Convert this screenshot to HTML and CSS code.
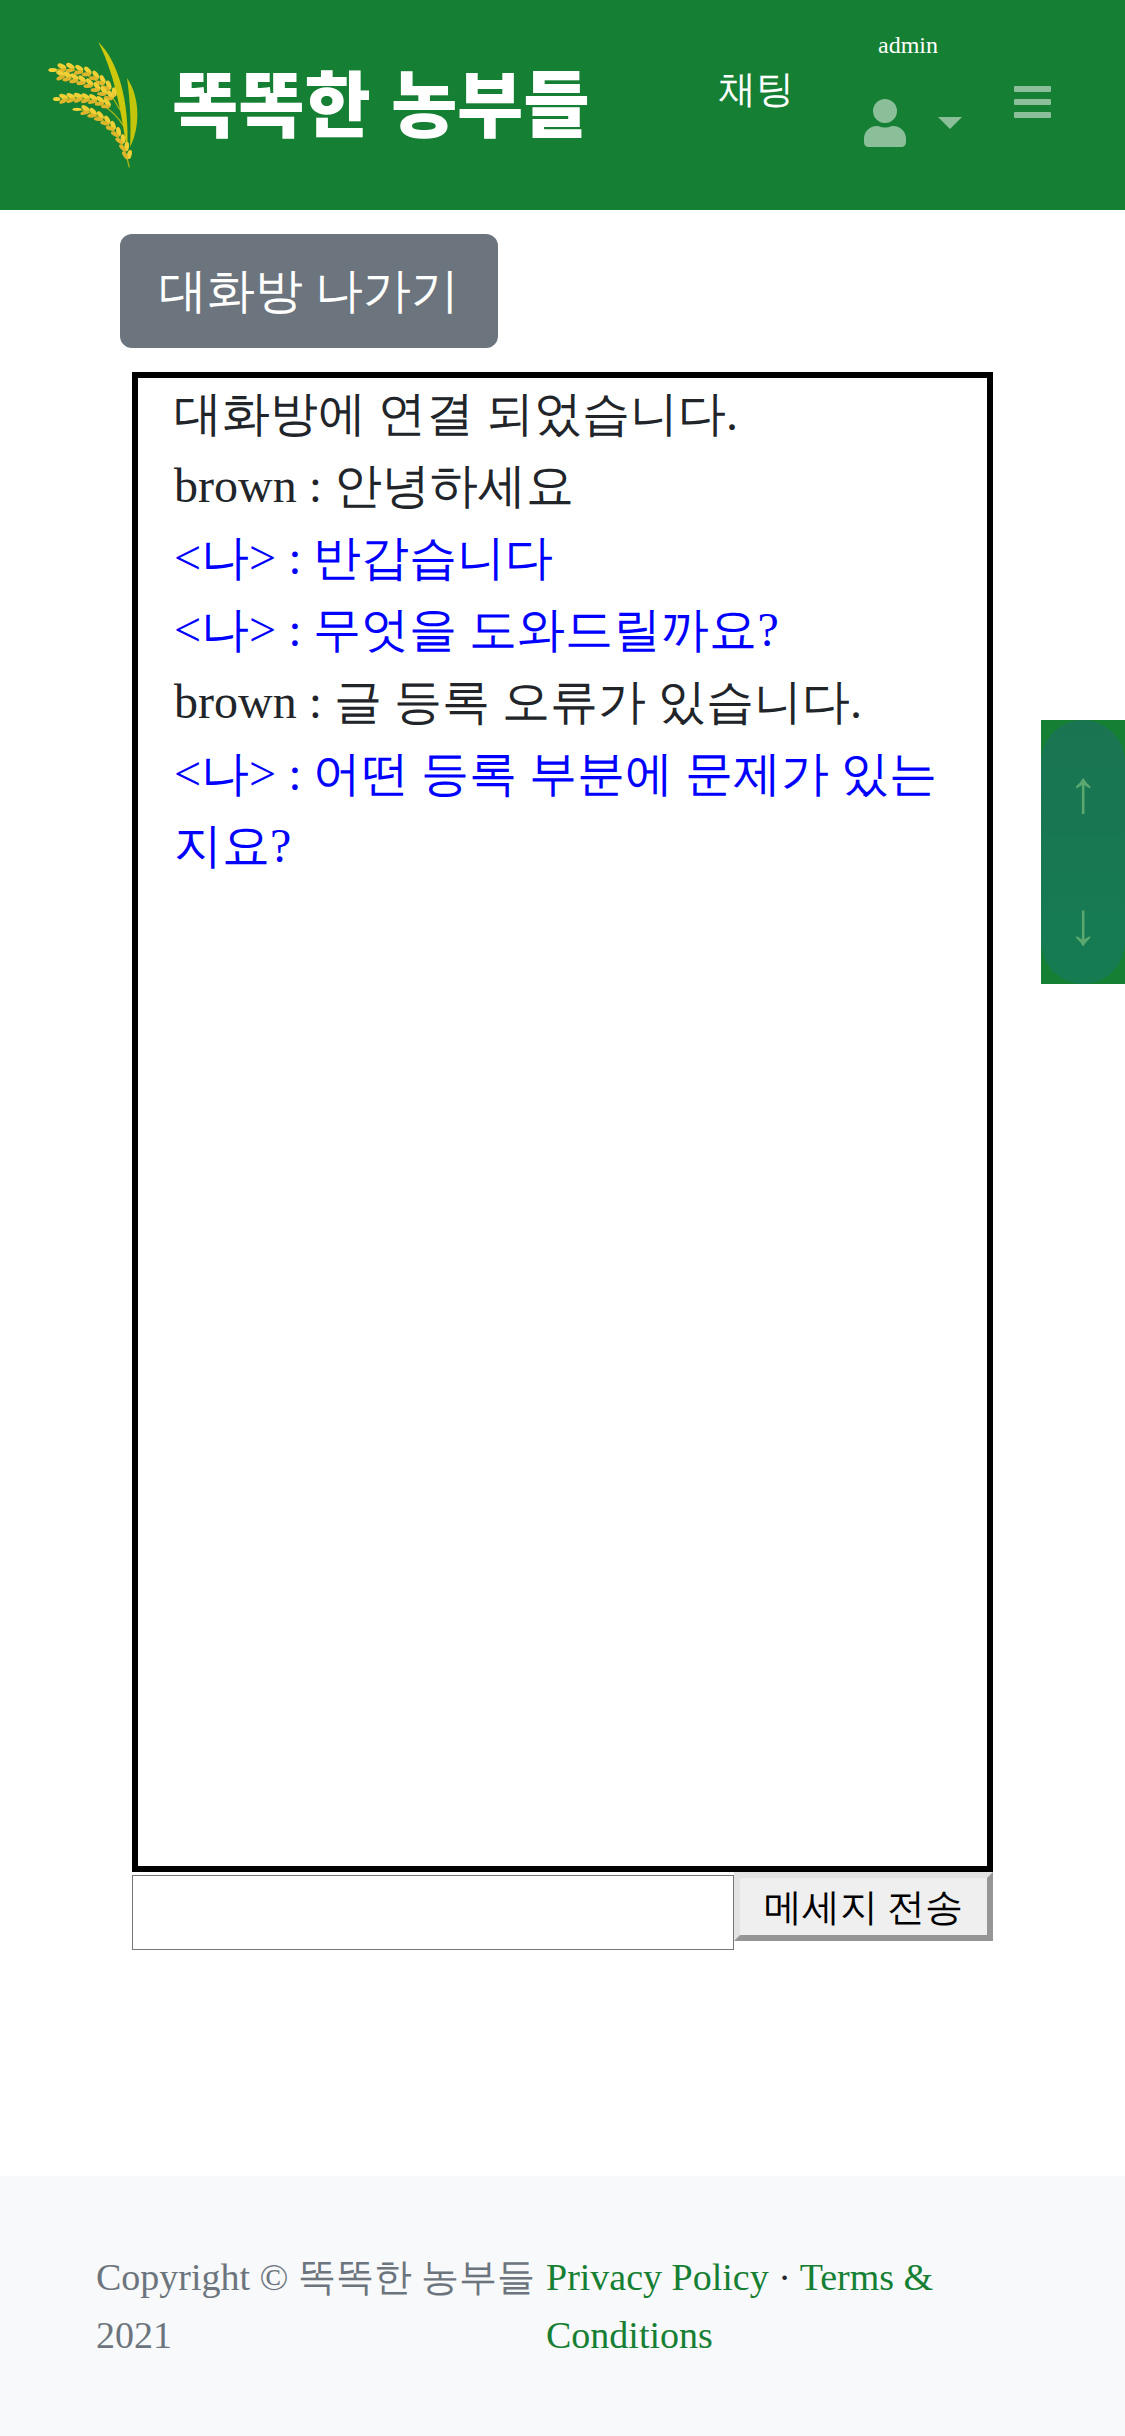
FILE: index.html
```html
<!DOCTYPE html>
<html lang="ko">
<head>
<meta charset="utf-8">
<meta name="viewport" content="width=device-width, initial-scale=1">
<title>똑똑한 농부들</title>
<link rel="stylesheet" href="styles.css">
</head>
<body>
<header class="topbar">
  <a class="brand" href="#">
    <svg class="brand-mark" viewBox="0 0 390 480" aria-hidden="true">
      <defs>
        <g id="grain">
          <ellipse cx="-1" cy="-6" rx="14" ry="7" transform="rotate(25)" fill="#f0d035"/>
          <ellipse cx="-1" cy="7" rx="14" ry="6" transform="rotate(-25)" fill="#ddb62c"/>
        </g>
      </defs>
      <g fill="none" stroke="#a8b414" stroke-width="4">
        <path d="M80 148Q200 140 270 270"/><path d="M95 237Q220 220 282 320"/><path d="M150 268Q270 300 298 442"/>
      </g>
      <path d="M205 66C262 120 300 240 292 390C275 300 262 180 205 66Z" fill="#cdc80c"/>
      <path d="M291 174C330 230 332 320 300 382C304 300 300 240 291 174Z" fill="#c3c40c"/>
      <ellipse cx="68" cy="150" rx="13" ry="6" fill="#f5d53a"/>
      <ellipse cx="80" cy="237" rx="11" ry="6" fill="#f5d53a"/>
      <ellipse cx="141" cy="268" rx="14" ry="5" fill="#f5d53a"/>
      <use href="#grain" transform="translate(94 145)"/><use href="#grain" transform="translate(119 144) rotate(5)"/><use href="#grain" transform="translate(145 150) rotate(12)"/><use href="#grain" transform="translate(170 156) rotate(20)"/><use href="#grain" transform="translate(193 168) rotate(30)"/><use href="#grain" transform="translate(213 182) rotate(38)"/><use href="#grain" transform="translate(231 198) rotate(45)"/><use href="#grain" transform="translate(247 218) rotate(55)"/>
      <use href="#grain" transform="translate(90 166)"/><use href="#grain" transform="translate(110 170) rotate(8)"/><use href="#grain" transform="translate(131 176) rotate(12)"/><use href="#grain" transform="translate(153 182) rotate(18)"/><use href="#grain" transform="translate(175 191) rotate(22)"/><use href="#grain" transform="translate(197 203) rotate(26)"/><use href="#grain" transform="translate(217 215) rotate(30)"/><use href="#grain" transform="translate(237 228) rotate(35)"/>
      <use href="#grain" transform="translate(99 236)"/><use href="#grain" transform="translate(121 234)"/><use href="#grain" transform="translate(143 233)"/><use href="#grain" transform="translate(165 235) rotate(5)"/><use href="#grain" transform="translate(187 238) rotate(10)"/><use href="#grain" transform="translate(208 244) rotate(16)"/><use href="#grain" transform="translate(228 252) rotate(24)"/>
      <use href="#grain" transform="translate(164 271) rotate(10)"/><use href="#grain" transform="translate(186 280) rotate(20)"/><use href="#grain" transform="translate(207 290) rotate(28)"/><use href="#grain" transform="translate(227 303) rotate(36)"/><use href="#grain" transform="translate(244 319) rotate(44)"/><use href="#grain" transform="translate(260 337) rotate(54)"/><use href="#grain" transform="translate(273 358) rotate(62)"/><use href="#grain" transform="translate(284 380) rotate(70)"/><use href="#grain" transform="translate(292 403) rotate(80)"/>
    </svg>
    <span class="brand-name">똑똑한 농부들</span>
  </a>
  <a class="nav-chat" href="#">채팅</a>
  <button class="account" type="button" aria-label="계정 메뉴">
    <span class="account-name">admin</span>
    <span class="account-icons">
      <svg class="icon-user" viewBox="0 0 448 512" aria-hidden="true"><path d="M224 256a128 128 0 1 0 0-256 128 128 0 0 0 0 256zm89.600 32h-16.700a174 174 0 0 1-145.800 0h-16.700C60.200 288 0 348.200 0 422.400V464c0 26.500 21.500 48 48 48h352c26.500 0 48-21.500 48-48v-41.600C448 348.200 387.800 288 313.600 288z"/></svg>
      <svg class="icon-caret" viewBox="0 0 24 12" aria-hidden="true"><path d="M0 0h24L12 12z"/></svg>
    </span>
  </button>
  <button class="menu" type="button" aria-label="메뉴">
    <svg class="icon-bars" viewBox="0 0 37 32" aria-hidden="true"><path d="M1 0h35q1 0 1 1v4q0 1-1 1H1q-1 0-1-1V1q0-1 1-1zM1 13h35q1 0 1 1v4q0 1-1 1H1q-1 0-1-1v-4q0-1 1-1zM1 26h35q1 0 1 1v4q0 1-1 1H1q-1 0-1-1v-4q0-1 1-1z"/></svg>
  </button>
</header>
<main class="room">
  <button class="leave" type="button">대화방 나가기</button>
  <section class="chat">
    <div class="log">
      <p>대화방에 연결 되었습니다.</p>
      <p>brown : 안녕하세요</p>
      <p class="mine">&lt;나&gt; : 반갑습니다</p>
      <p class="mine">&lt;나&gt; : 무엇을 도와드릴까요?</p>
      <p>brown : 글 등록 오류가 있습니다.</p>
      <p class="mine">&lt;나&gt; : 어떤 등록 부분에 문제가 있는지요?</p>
    </div>
    <form class="composer">
      <input class="message" type="text" aria-label="메세지">
      <button class="send" type="button">메세지 전송</button>
    </form>
  </section>
</main>
<nav class="scroller" aria-label="스크롤">
  <a href="#">↑</a>
  <a href="#">↓</a>
</nav>
<footer class="footer">
  <div class="copyright">Copyright © 똑똑한 농부들 2021</div>
  <div class="legal"><a href="#">Privacy Policy</a> · <a href="#">Terms &amp; Conditions</a></div>
</footer>
</body>
</html>
```
FILE: styles.css
```css
* { box-sizing: border-box; }

body {
  margin: 0;
  min-height: 100vh;
  display: flex;
  flex-direction: column;
  font: 48px/72px "Liberation Serif", serif;
  color: #212529;
  background: #fff;
}

p { margin: 0; }
a { color: #157f33; text-decoration: none; }
button, input { font-family: inherit; }

.topbar {
  display: flex;
  align-items: flex-start;
  height: 210px;
  padding: 20px 74px 0 30px;
  background: #157f33;
}

.brand { display: flex; flex: 1; align-items: center; gap: 12px; }
.brand-mark { width: 130px; height: 160px; }
.brand-name {
  font-family: "Noto Sans CJK KR", sans-serif;
  font-size: 72px;
  font-weight: 900;
  color: #fff;
  white-space: nowrap;
}

.nav-chat {
  margin-top: 40px;
  font-size: 38px;
  line-height: 58px;
  color: #fff;
}

.account {
  display: flex;
  flex-direction: column;
  align-items: flex-start;
  margin: 7px 52px 0 70px;
  padding: 0;
  border: 0;
  background: none;
  color: #fff;
}
.account-name { padding-left: 14px; font-size: 24px; line-height: 36px; }
.account-icons { display: flex; align-items: center; gap: 32px; margin-top: 36px; }
.icon-user { width: 42px; height: 48px; }
.icon-caret { width: 24px; height: 12px; }
.icon-user, .icon-caret, .icon-bars { display: block; fill: #8abf99; }

.menu { margin: 66px 0 0; padding: 0; border: 0; background: none; }
.icon-bars { width: 37px; height: 32px; }

.room { flex: 1; padding: 24px 132px 72px; }

.leave {
  display: block;
  margin: 0 0 24px -12px;
  padding: 18px 36px;
  border: 3px solid #6c757d;
  border-radius: 12px;
  background: #6c757d;
  color: #fff;
  font-size: 48px;
  line-height: 72px;
}

.log {
  min-height: 1500px;
  padding: 0 30px 0 36px;
  border: 6px solid #000;
  word-break: break-all;
}
.mine { color: #00f; }

.composer { display: flex; align-items: flex-start; }
.message {
  flex: 1;
  min-width: 0;
  height: 75px;
  margin-top: 3px;
  border: 1px solid #767676;
  font-size: 38px;
}
.send {
  height: 69px;
  padding: 0 24px;
  border: 6px solid;
  border-color: #e3e3e3 #969696 #969696 #e3e3e3;
  background: #efefef;
  color: #000;
  font-size: 38px;
  line-height: 56px;
}

.scroller {
  position: fixed;
  top: 720px;
  right: 0;
  width: 84px;
  height: 264px;
  padding-top: 6px;
  background: #157f33;
}
.scroller::before {
  content: "";
  position: absolute;
  inset: 0;
  border-radius: 42px;
  background: linear-gradient(#1a7452, #157c52);
}
.scroller a {
  display: block;
  position: relative;
  color: #5aa870;
  font-size: 60px;
  line-height: 132px;
  text-align: center;
}

.footer {
  display: flex;
  padding: 72px 96px;
  background: #f8f9fa;
  font-size: 38px;
  line-height: 58px;
}
.copyright { width: 450px; color: #6c757d; word-break: keep-all; }
.legal { flex: 1; }
```
